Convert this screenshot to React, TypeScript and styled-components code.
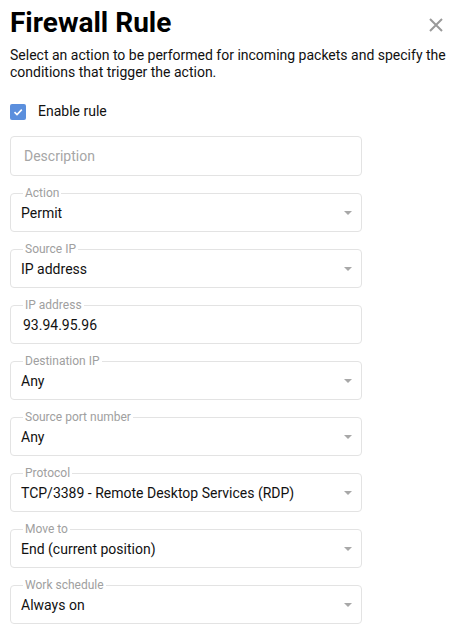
import React from "react";
import styled, { createGlobalStyle } from "styled-components";

const GlobalStyle = createGlobalStyle`
  html, body { margin: 0; padding: 0; background: #fff; }
  body { font-family: Roboto, "Liberation Sans", Arial, sans-serif; color: rgba(0,0,0,0.87); }
  * { box-sizing: border-box; }
`;

const Page = styled.div`
  width: 454px;
  padding: 6px 0 0 10px;
`;

const Header = styled.div`
  display: flex;
  align-items: center;
  justify-content: space-between;
  padding-right: 11px;
`;

const Title = styled.h1`
  margin: 0;
  font-size: 28px;
  line-height: 34px;
  font-weight: 700;
  color: #000;
`;

const CloseButton = styled.button`
  border: 0;
  background: transparent;
  padding: 0;
  width: 14px;
  height: 14px;
  margin-top: 4px;
  display: flex;
  cursor: pointer;
`;

const Subtitle = styled.p`
  margin: 7px 0 0;
  font-size: 14px;
  line-height: 17px;
  color: #111;
  padding-right: 6px;
`;

const CheckRow = styled.label`
  display: flex;
  align-items: center;
  gap: 12px;
  margin-top: 22px;
  font-size: 14px;
  line-height: 17px;
  color: #111;
`;

const CheckBox = styled.span`
  width: 16px;
  height: 16px;
  border-radius: 2px;
  background: #5b8fdd;
  display: flex;
  align-items: center;
  justify-content: center;
`;

const Fields = styled.div`
  display: flex;
  flex-direction: column;
  gap: 10px;
  width: 352px;
  margin-top: 16px;
`;

const PlainInput = styled.div`
  height: 40px;
  border: 1px solid #e3e3e3;
  border-radius: 4px;
  display: flex;
  align-items: center;
  padding: 0 13px;
  font-size: 14px;
  color: #a6a6a6;
`;

const Field = styled.fieldset`
  margin: 0;
  padding: 0 9px 6px 10px;
  min-width: 0;
  border: 1px solid #e3e3e3;
  border-radius: 4px;
`;

const Legend = styled.legend`
  margin-left: 2px;
  padding: 0 2px;
  font-size: 12px;
  line-height: 14px;
  color: #a0a0a0;
`;

const ValueRow = styled.div<{ $input?: boolean }>`
  display: flex;
  align-items: center;
  justify-content: space-between;
  height: 25px;
  padding-left: ${(p) => (p.$input ? "2px" : "0")};
  font-size: 14px;
  color: #111;
`;

const Arrow = () => (
  <svg width="8" height="4" viewBox="0 0 8 4">
    <polygon points="0,0 8,0 4,4" fill="#a8a8a8" />
  </svg>
);

type F = { label: string; value: string; input?: boolean };

const fields: F[] = [
  { label: "Action", value: "Permit" },
  { label: "Source IP", value: "IP address" },
  { label: "IP address", value: "93.94.95.96", input: true },
  { label: "Destination IP", value: "Any" },
  { label: "Source port number", value: "Any" },
  { label: "Protocol", value: "TCP/3389 - Remote Desktop Services (RDP)" },
  { label: "Move to", value: "End (current position)" },
  { label: "Work schedule", value: "Always on" },
];

export default function App() {
  return (
    <Page>
      <GlobalStyle />
      <Header>
        <Title>Firewall Rule</Title>
        <CloseButton aria-label="Close">
          <svg width="14" height="14" viewBox="0 0 14 14">
            <path d="M1 1 L13 13 M13 1 L1 13" stroke="#9a9a9a" strokeWidth="2" />
          </svg>
        </CloseButton>
      </Header>
      <Subtitle>
        Select an action to be performed for incoming packets and specify the conditions that trigger the action.
      </Subtitle>
      <CheckRow>
        <CheckBox>
          <svg width="12" height="12" viewBox="0 0 12 12">
            <path d="M2.5 6.2 L5 8.6 L9.8 3.6" stroke="#fff" strokeWidth="1.6" fill="none" />
          </svg>
        </CheckBox>
        Enable rule
      </CheckRow>
      <Fields>
        <PlainInput>Description</PlainInput>
        {fields.map((f) => (
          <Field key={f.label}>
            <Legend>{f.label}</Legend>
            <ValueRow $input={f.input}>
              <span>{f.value}</span>
              {!f.input && <Arrow />}
            </ValueRow>
          </Field>
        ))}
      </Fields>
    </Page>
  );
}
